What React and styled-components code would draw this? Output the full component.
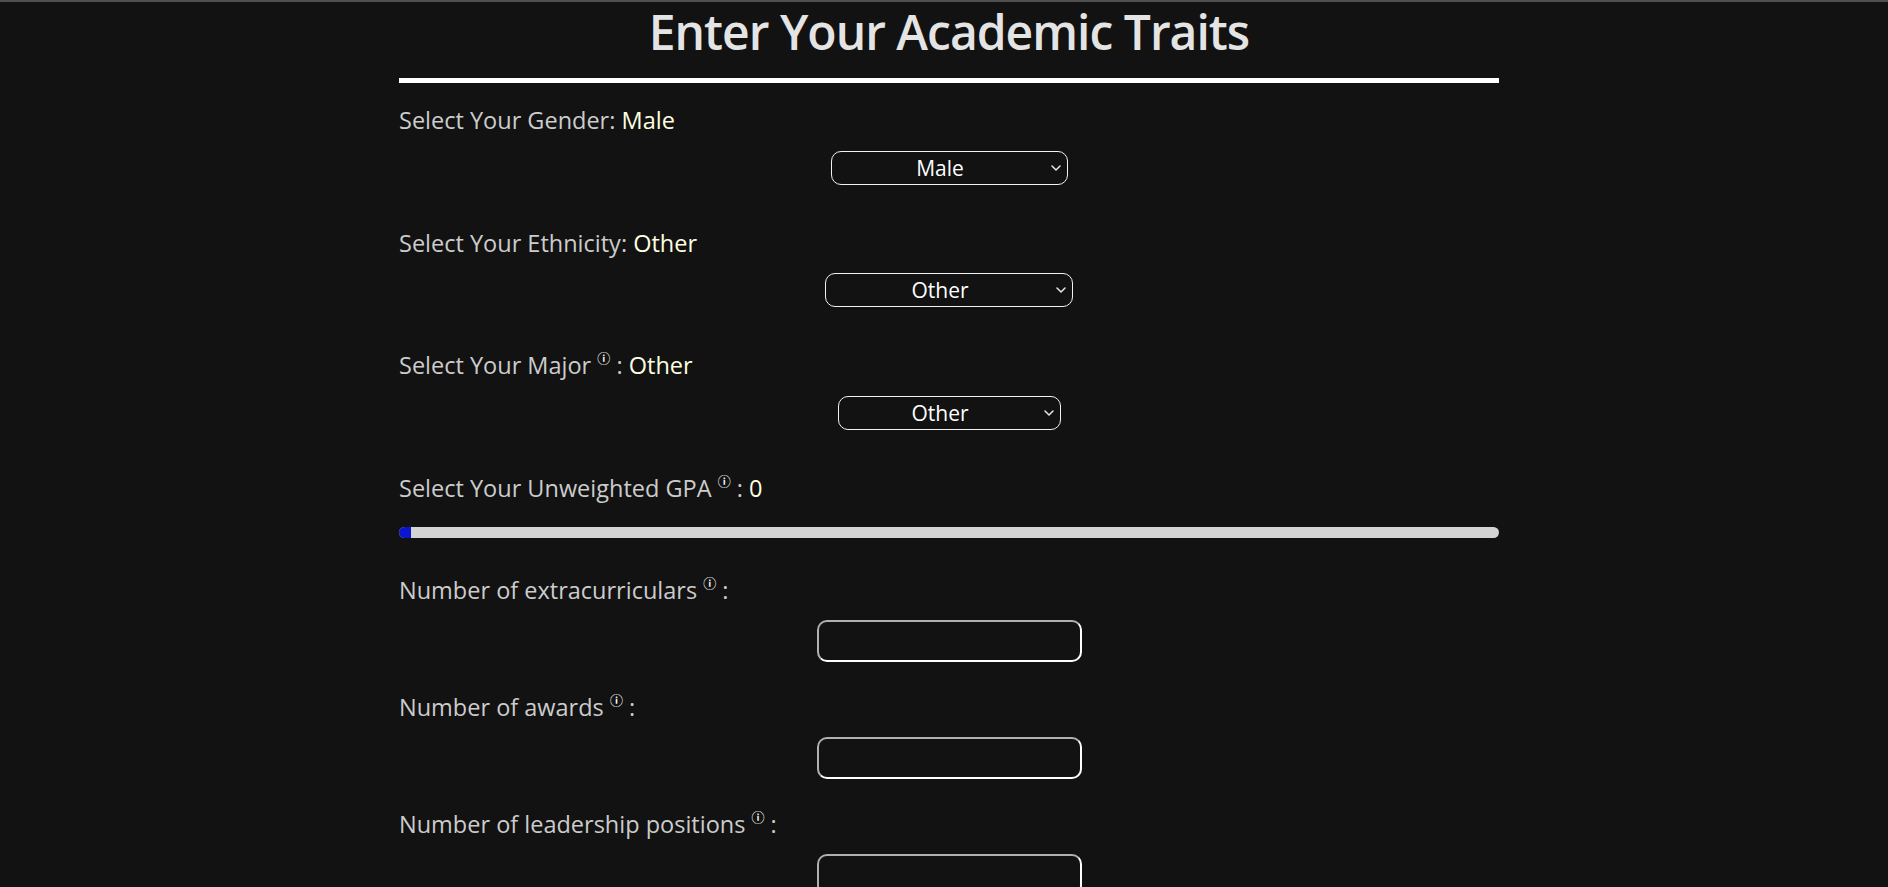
import React from 'react';
import styled, { createGlobalStyle } from 'styled-components';

const Global = createGlobalStyle`
  html, body {
    margin: 0;
    background: #121212;
  }
  body {
    border-top: 2px solid #505050;
    padding-left: 10px;
    font-family: "Open Sans", "Liberation Sans", sans-serif;
    color: #cccccc;
  }
`;

const Page = styled.main`
  width: 1100px;
  margin: 0 auto;
`;

const Title = styled.h1`
  margin: 0;
  font-size: 48px;
  line-height: 60px;
  font-weight: 600;
  letter-spacing: -1px;
  text-align: center;
  color: #e4e4e4;
`;

const Rule = styled.hr`
  margin: 16px 0 21px;
  height: 5px;
  border: none;
  background: #ffffff;
`;

const Field = styled.section`
  display: flex;
  flex-direction: column;
  gap: ${p => p.$gap}px;
  margin-bottom: ${p => p.$space}px;
`;

const Label = styled.label`
  display: block;
  font-size: 23.5px;
  line-height: 32px;
  color: #cccccc;
`;

const Value = styled.span`
  color: #ffffe0;
`;

const Info = styled.sup`
  font-family: "DejaVu Sans", "Noto Sans CJK JP", sans-serif;
  font-size: 13px;
  font-weight: 700;
  line-height: 0;
  vertical-align: 11px;
  color: #ffffff;
`;

const Row = styled.div`
  display: flex;
  justify-content: center;
`;

const SelectWrap = styled.div`
  position: relative;
  width: ${p => p.$width}px;
`;

const Select = styled.select`
  appearance: none;
  width: 100%;
  height: 34px;
  padding: 0 18px 0 0;
  border: 1px solid #f2f2f2;
  border-radius: 10px;
  background: #121212;
  color: #ffffff;
  font-family: "Open Sans", "Liberation Sans", sans-serif;
  font-size: 21px;
  text-align: center;
  text-align-last: center;
  outline: none;
`;

const Chevron = styled.svg`
  position: absolute;
  right: 7px;
  top: 14px;
  pointer-events: none;
`;

const Range = styled.input`
  -webkit-appearance: none;
  appearance: none;
  display: block;
  width: 100%;
  height: 11px;
  margin: 0;
  background: #d3d3d3;
  border-radius: 6px;
  overflow: hidden;
  outline: none;

  &::-webkit-slider-thumb {
    -webkit-appearance: none;
    width: 12px;
    height: 11px;
    background: #0a16cf;
    border: none;
  }
`;

const NumberInput = styled.input`
  box-sizing: border-box;
  width: 265px;
  height: 42px;
  border-width: 2px;
  border-style: solid;
  border-color: #b0b0b0 #ffffff #ffffff #b0b0b0;
  border-radius: 10px;
  background: #121212;
  color: #ffffff;
  font-size: 20px;
  outline: none;
`;

function InfoMark() {
    return <Info>ⓘ</Info>;
}

function Dropdown({ width, value, options }) {
    return (<SelectWrap $width={width}>
        <Select defaultValue={value}>
            { options.map(o => <option key={o}>{ o }</option>) }
        </Select>
        <Chevron width="10" height="6" viewBox="0 0 10 6">
            <path d="M1 1 L5 5 L9 1" fill="none" stroke="#e8e8e8" strokeWidth="1.5" strokeLinecap="round" strokeLinejoin="round" />
        </Chevron>
    </SelectWrap>
    );
}

function SelectField({ label, info, value, width, options }) {
    return (<Field $gap={14.5} $space={42}>
        <Label>
            { label }{ info ? <> <InfoMark /> :</> : ':' } <Value>{ value }</Value>
        </Label>
        <Row>
            <Dropdown width={width} value={value} options={options} />
        </Row>
    </Field>
    );
}

function CountField({ label }) {
    return (<Field $gap={14} $space={29}>
        <Label>{ label } <InfoMark /> :</Label>
        <Row>
            <NumberInput type="number" />
        </Row>
    </Field>
    );
}

export default function App() {
    return (<>
        <Global />
        <Page>
            <Title>Enter Your Academic Traits</Title>
            <Rule />
            <SelectField label="Select Your Gender" value="Male" width={237}
                options={['Male', 'Female', 'Non-binary', 'Other']} />
            <SelectField label="Select Your Ethnicity" value="Other" width={248}
                options={['Asian', 'Black', 'Hispanic', 'White', 'Native American', 'Other']} />
            <SelectField label="Select Your Major" info value="Other" width={223}
                options={['Engineering', 'Humanities', 'Business', 'Sciences', 'Other']} />
            <Field $gap={23} $space={36}>
                <Label>Select Your Unweighted GPA <InfoMark /> : <Value>0</Value></Label>
                <Range type="range" min="0" max="4" step="0.01" defaultValue="0" />
            </Field>
            <CountField label="Number of extracurriculars" />
            <CountField label="Number of awards" />
            <CountField label="Number of leadership positions" />
        </Page>
    </>
    );
}
